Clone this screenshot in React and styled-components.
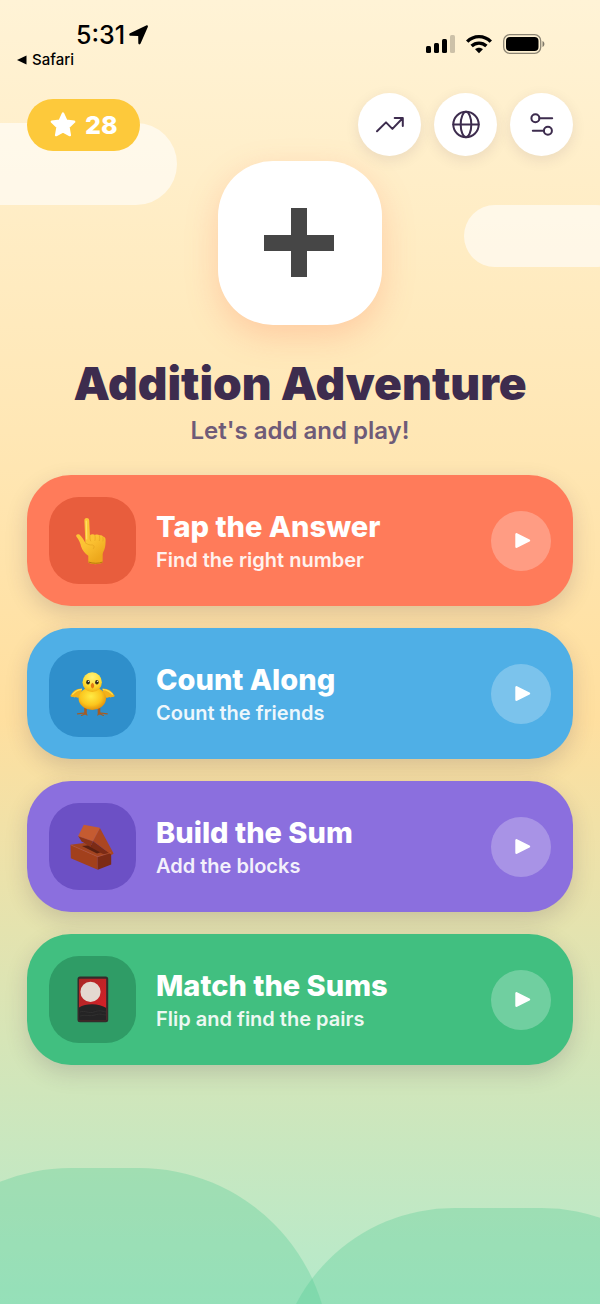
import React from "react"
import styled, { createGlobalStyle } from "styled-components"

const GlobalStyle = createGlobalStyle`
  * {
    box-sizing: border-box;
  }
  body {
    margin: 0;
    font-family: Inter, "Liberation Sans", sans-serif;
    background: #b5eacb;
  }
  h1, h2, p {
    margin: 0;
  }
  button {
    border: none;
    padding: 0;
    font-family: inherit;
    cursor: pointer;
  }
  svg {
    display: block;
  }
`

const PointingHand = () => (
  <svg width="48" height="48" viewBox="0 0 48 48" aria-hidden="true">
    <defs>
      <linearGradient id="hand" x1="0" y1="0" x2="0.5" y2="1">
        <stop offset="0" stopColor="#fccb3a" />
        <stop offset="0.6" stopColor="#fcc233" />
        <stop offset="1" stopColor="#eda81c" />
      </linearGradient>
    </defs>
    <path
      d="M15.400 3.500c0-3.200 4.700-3.200 4.800 0l.7 14.700c1.400-1.300 3.800-1.200 5.100-.2 1.300-.7 3.300-.6 4.500.3 1.400-.3 2.900.2 3.500 1.300 1.900.3 2.700 1.700 2.600 3.600-.1 3.200-.1 6-1 8.600-.6 2-1.700 3.400-1.900 5.300l-.1 8.500c-3.500 2.200-11 2.200-14.300 0v-6.800c-3.200-2.300-6-5.300-7.200-9.300-.6-3.500-2.300-6.600-4.600-9.700-1.200-1.900 1-3.500 2.900-2.200 2.300 2 4.300 5 6 8.400z"
      fill="url(#hand)"
    />
    <g fill="none" stroke="#dc9a1b" strokeLinecap="round" strokeWidth="0.700" opacity="0.700">
      <path d="M21 18.500c-.2 2.200 0 4 .7 5.500M25.900 18.500c.5 1.800.4 3.500 0 5M30.400 19c.5 1.600.4 3.200 0 4.600M33.900 20.500c.4 1.300.4 2.500 0 3.500" />
      <path d="M16.500 26c2.500 1.800 4.500 2 7 2 1.800.5 2 2 1 3.500" />
    </g>
    <path d="M20 45.200c4 1.500 9.500 1.500 13.200 0" fill="none" stroke="#b9790d" strokeWidth="1" strokeLinecap="round" />
    <path d="M17.300 4l.4 18" stroke="#ffdf66" strokeWidth="1.200" strokeLinecap="round" />
  </svg>
)

const Chick = () => (
  <svg width="48" height="48" viewBox="0 0 48 48" aria-hidden="true">
    <defs>
      <radialGradient id="chickHead" cx="0.5" cy="0.25" r="0.8">
        <stop offset="0" stopColor="#fff27a" />
        <stop offset="0.6" stopColor="#ffdc32" />
        <stop offset="1" stopColor="#eda60c" />
      </radialGradient>
      <radialGradient id="chickBody" cx="0.45" cy="0.4" r="0.65">
        <stop offset="0" stopColor="#ffeb45" />
        <stop offset="0.6" stopColor="#fbc51d" />
        <stop offset="1" stopColor="#dd870b" />
      </radialGradient>
    </defs>
    <g fill="none" stroke="#a55c25" strokeLinecap="round">
      <path d="M16.500 38v5.500M30 38v5.500" strokeWidth="2.600" />
      <path d="M8.500 43.800l8-.8 1.500 2M12.500 45.500l4.500-2M38.300 43.800l-8-.8-1.500 2M34.500 45.500l-4.500-2" strokeWidth="1.200" />
    </g>
    <path
      d="M13 18.500C7 18.500 3.500 21.500 1.300 26c1 1.200 2 1.200 2.800.8.800 1 2 1 2.800.3 1.400 1.200 3.600.8 5.100-.6zM33.500 18.500c6 0 9.900 3 12.300 7.500-1 1.200-2 1.200-2.800.8-.8 1-2 1-2.800.3-1.400 1.200-3.800.8-5.300-.6z"
      fill="#f3b11b"
    />
    <path d="M13 19.300c-4.500.5-7.500 2.400-9.700 5.400M33.700 19.300c4.500.5 7.800 2.400 10 5.400" fill="none" stroke="#ffdf4c" strokeWidth="1.200" />
    <ellipse cx="23.300" cy="28.600" rx="13.700" ry="11.300" fill="url(#chickBody)" />
    <ellipse cx="23.200" cy="12.200" rx="9.700" ry="9.900" fill="url(#chickHead)" />
    <ellipse cx="19" cy="12.200" rx="1.800" ry="2.200" fill="#332b1c" />
    <ellipse cx="27.900" cy="12.200" rx="1.800" ry="2.200" fill="#332b1c" />
    <circle cx="19.500" cy="11.300" r="0.600" fill="#fff" />
    <circle cx="28.400" cy="11.300" r="0.600" fill="#fff" />
    <path d="M23.500 12.800c1.200 1 2.100 2.500 1.600 3.800-.3 1-1 1.700-1.600 2-.6-.3-1.300-1-1.600-2-.5-1.300.4-2.800 1.600-3.800z" fill="#e37a12" />
  </svg>
)

const Bricks = () => (
  <svg width="48" height="48" viewBox="0 0 48 48" aria-hidden="true">
    <path d="M1.500 21.700L14.800 20l27.400 9.500-13.400 4.200z" fill="#a34420" />
    <path d="M1.500 21.700l27.300 12v13.100L1.800 35.200z" fill="#a2401c" />
    <path d="M28.800 33.700l13.400-4.200v12l-13.400 5.300z" fill="#7c2b15" />
    <path d="M13 23l10-1 11 6.500-6 2z" fill="#5a2011" />
    <path d="M14.800 1.700l16 3.100-7 13.200-14.600-5z" fill="#c55b31" />
    <path d="M30.800 4.800l13.800 25.700-2 1.500-18.800-14z" fill="#ab4622" />
    <path d="M9.200 13l14.600 5-2 6.200-9.300-6z" fill="#8c3418" />
    <path d="M23.800 18l18.800 14-8.600-1-12.200-6.800z" fill="#7c2b15" />
    <path d="M2 22l26.800 11.700L42 29.600M9.400 13l14.400 5 6.800-12.900" fill="none" stroke="#c8643a" strokeWidth="0.500" />
  </svg>
)

const FlowerCard = () => (
  <svg width="48" height="48" viewBox="0 0 48 48" aria-hidden="true">
    <defs>
      <linearGradient id="sky" x1="0" y1="0" x2="1" y2="1">
        <stop offset="0" stopColor="#a92725" />
        <stop offset="1" stopColor="#dc2029" />
      </linearGradient>
      <clipPath id="cardFace">
        <rect x="10" y="2.500" width="27.400" height="42" rx="1" />
      </clipPath>
    </defs>
    <rect x="8.500" y="0.500" width="30.700" height="45.800" rx="2.500" fill="#352b2b" />
    <g clipPath="url(#cardFace)">
      <rect x="10" y="2.500" width="27.400" height="42" fill="url(#sky)" />
      <path d="M10 31.500c7-4.500 20-4.500 27.400.5v13H10z" fill="#252425" />
      <path d="M11 36c5-2 9 2 14 0s8-1 12 0M11 40c6-2 10 1 15-1s8 0 11 0" fill="none" stroke="#343232" strokeWidth="0.800" />
    </g>
    <circle cx="21.500" cy="15.800" r="10.100" fill="#e4d8d0" />
  </svg>
)

const games = [
  {
    title: "Tap the Answer",
    text: "Find the right number",
    color: "#ff7b5a",
    dark: "#e85d3d",
    icon: <PointingHand />,
  },
  {
    title: "Count Along",
    text: "Count the friends",
    color: "#4fafe6",
    dark: "#2f8fcb",
    icon: <Chick />,
  },
  {
    title: "Build the Sum",
    text: "Add the blocks",
    color: "#8b6fde",
    dark: "#6c50c5",
    icon: <Bricks />,
  },
  {
    title: "Match the Sums",
    text: "Flip and find the pairs",
    color: "#41bf80",
    dark: "#2f9c66",
    icon: <FlowerCard />,
  },
]

const StatusBar = () => (
  <Status>
    <div>
      <Time>
        5:31
        <svg width="20" height="20" viewBox="0 0 20 20" aria-hidden="true">
          <path d="M1 8.300L17.200.5c1.300-.6 2.100.3 1.600 1.500l-7.200 16.600c-.6 1.300-2.300 1-2.300-.5l-.1-7.200-7.500-.1c-1.600 0-2-1.800-.7-2.500z" />
        </svg>
      </Time>
      <BackLink href="#safari">
        <svg width="10" height="10" viewBox="0 0 10 10" aria-hidden="true">
          <path d="M9.500.5v9L0 5z" />
        </svg>
        Safari
      </BackLink>
    </div>
    <Signals>
      <svg width="30" height="20" viewBox="0 0 30 20" aria-hidden="true">
        <rect x="1" y="12" width="5" height="7" rx="1.500" />
        <rect x="9" y="9" width="5" height="10" rx="1.500" />
        <rect x="17" y="5" width="5" height="14" rx="1.500" />
        <rect x="25" y="1" width="5" height="18" rx="1.500" opacity="0.200" />
      </svg>
      <svg width="26" height="20" viewBox="0 0 26 20" aria-hidden="true">
        <g fill="none" stroke="#000" strokeWidth="3.400">
          <path d="M1.200 7.600c6.600-6.700 17-6.700 23.600 0" />
          <path d="M5.600 12.100c4.200-4 10.600-4 14.800 0" />
        </g>
        <path d="M13 19.300l-3.900-4c2.200-2 5.600-2 7.800 0z" />
      </svg>
      <svg width="42" height="20" viewBox="0 0 42 20" aria-hidden="true">
        <rect x="0.700" y="0.700" width="37" height="18.600" rx="6" fill="none" stroke="#000" strokeOpacity="0.450" strokeWidth="1.300" />
        <rect x="3" y="3" width="32.500" height="14" rx="4" />
        <path d="M39.500 7c2.500.8 2.500 5.200 0 6z" opacity="0.500" />
      </svg>
    </Signals>
  </Status>
)

const GameCard = ({ title, text, color, dark, icon }) => (
  <Card $color={color}>
    <Tile $color={dark}>{icon}</Tile>
    <CardText>
      <CardTitle>{title}</CardTitle>
      <CardNote>{text}</CardNote>
    </CardText>
    <Play>
      <svg width="20" height="20" viewBox="0 0 20 20" aria-hidden="true">
        <path d="M5.500 3.300v12.400L18 9.500z" fill="#fff" stroke="#fff" strokeWidth="2.400" strokeLinejoin="round" />
      </svg>
    </Play>
  </Card>
)

const App = () => {
  return (
    <>
      <GlobalStyle />
      <Page>
        <Cloud $top="123px" $left="-40px" $width="217px" $height="82px" />
        <Cloud $top="205px" $right="-27px" $width="163px" $height="62px" />
        <Hill $top="1168px" $left="-20%" $width="75%" />
        <Hill $top="1208px" $right="-20%" $width="74%" />
        <StatusBar />
        <Content>
          <Toolbar>
            <Stars>
              <svg width="28" height="28" viewBox="0 0 26 26" aria-hidden="true">
                <path
                  d="M13 2.300l3.100 6.700 7.300 1-5.300 5.100 1.300 7.300L13 18.900l-6.400 3.500 1.300-7.300L2.600 10l7.300-1z"
                  fill="#fff"
                  stroke="#fff"
                  strokeWidth="2.200"
                  strokeLinejoin="round"
                />
              </svg>
              28
            </Stars>
            <Actions>
              <RoundButton type="button" aria-label="Progress">
                <svg width="32" height="32" viewBox="0 0 32 32">
                  <path d="M3 22.300l9-8.900 6.400 6.500L28.800 9M20.700 8.900h8.100v8.200" />
                </svg>
              </RoundButton>
              <RoundButton type="button" aria-label="Language">
                <svg width="32" height="32" viewBox="0 0 32 32">
                  <circle cx="16" cy="15.500" r="12.700" />
                  <ellipse cx="16" cy="15.500" rx="5.300" ry="12.700" />
                  <path d="M3.300 15.500h25.400" />
                </svg>
              </RoundButton>
              <RoundButton type="button" aria-label="Settings">
                <svg width="32" height="32" viewBox="0 0 32 32">
                  <circle cx="9.400" cy="9.300" r="4" />
                  <circle cx="21.900" cy="21.700" r="4" />
                  <path d="M13.400 9.300h12.800M17.900 21.700H6.800" />
                </svg>
              </RoundButton>
            </Actions>
          </Toolbar>
          <Hero>
            <svg width="72" height="72" viewBox="0 0 72 72" aria-hidden="true">
              <path d="M27 1h16v27h27v16H43v26H27V44H0V28h27z" fill="#464646" />
            </svg>
          </Hero>
          <Title>Addition Adventure</Title>
          <Subtitle>Let's add and play!</Subtitle>
          <Games>
            {games.map(game => (
              <GameCard key={game.title} {...game} />
            ))}
          </Games>
        </Content>
      </Page>
    </>
  )
}

const Page = styled.main`
  position: relative;
  min-height: 100vh;
  overflow: hidden;
  background: linear-gradient(#fff3d6 0%, #ffdf9f 55%, #b5eacb 100%);
`

const Cloud = styled.div`
  position: absolute;
  top: ${props => props.$top};
  left: ${props => props.$left};
  right: ${props => props.$right};
  width: ${props => props.$width};
  height: ${props => props.$height};
  border-radius: 41px;
  background: rgba(255, 255, 255, 0.6);
`

const Hill = styled.div`
  position: absolute;
  top: ${props => props.$top};
  bottom: -260px;
  left: ${props => props.$left};
  right: ${props => props.$right};
  width: ${props => props.$width};
  border-radius: 191px;
  background: rgba(86, 204, 150, 0.33);
`

const Status = styled.div`
  position: relative;
  display: flex;
  justify-content: space-between;
  height: 93px;
  padding: 20px 55px 0 17px;
`

const Time = styled.div`
  display: flex;
  align-items: center;
  gap: 4px;
  padding-left: 59px;
  font-size: 25px;
  font-weight: 500;
  line-height: 30px;
`

const BackLink = styled.a`
  display: flex;
  align-items: center;
  gap: 5px;
  font-size: 15px;
  font-weight: 500;
  line-height: 20px;
  color: #000;
  text-decoration: none;
`

const Signals = styled.div`
  display: flex;
  gap: 11px;
  padding-top: 14px;
`

const Content = styled.div`
  position: relative;
  display: flex;
  flex-direction: column;
  align-items: center;
  padding: 0 27px 40px;
`

const Toolbar = styled.header`
  display: flex;
  align-items: center;
  justify-content: space-between;
  width: 100%;
`

const Stars = styled.div`
  display: flex;
  align-items: center;
  gap: 8px;
  height: 52px;
  padding: 0 22px;
  border-radius: 26px;
  background: #fdc93b;
  color: #fff;
  font-size: 25px;
  font-weight: 800;
`

const Actions = styled.div`
  display: flex;
  gap: 13px;
`

const RoundButton = styled.button`
  display: grid;
  place-items: center;
  width: 63px;
  height: 63px;
  border-radius: 50%;
  background: #fff;
  box-shadow: 0 4px 14px rgba(61, 43, 79, 0.1);

  svg {
    fill: none;
    stroke: #3d2c4e;
    stroke-width: 2;
    stroke-linecap: round;
    stroke-linejoin: round;
  }
`

const Hero = styled.div`
  display: grid;
  place-items: center;
  width: 164px;
  height: 164px;
  margin-top: 5px;
  border-radius: 55px;
  background: #fff;
  box-shadow: 0 11px 32px rgba(255, 123, 90, 0.27);
`

const Title = styled.h1`
  margin-top: 30px;
  font-size: 46px;
  font-weight: 900;
  line-height: 56px;
  color: #3d2c4e;
`

const Subtitle = styled.p`
  margin-top: 4px;
  font-size: 24px;
  font-weight: 600;
  line-height: 32px;
  color: #6e5b78;
`

const Games = styled.section`
  display: flex;
  flex-direction: column;
  gap: 22px;
  width: 100%;
  margin-top: 28px;
`

const Card = styled.button`
  display: flex;
  align-items: center;
  gap: 20px;
  width: 100%;
  padding: 22px;
  border-radius: 44px;
  background: ${props => props.$color};
  box-shadow: 0 8px 22px rgba(61, 43, 79, 0.18);
  color: #fff;
  text-align: left;
`

const Tile = styled.span`
  display: grid;
  place-items: center;
  width: 87px;
  height: 87px;
  border-radius: 30px;
  background: ${props => props.$color};
`

const CardText = styled.span`
  display: flex;
  flex: 1;
  flex-direction: column;
`

const CardTitle = styled.span`
  font-size: 29px;
  font-weight: 800;
  line-height: 38px;
`

const CardNote = styled.span`
  font-size: 20px;
  font-weight: 600;
  line-height: 28px;
  opacity: 0.9;
`

const Play = styled.span`
  display: grid;
  place-items: center;
  width: 60px;
  height: 60px;
  border-radius: 50%;
  background: rgba(255, 255, 255, 0.25);
`

export default App
